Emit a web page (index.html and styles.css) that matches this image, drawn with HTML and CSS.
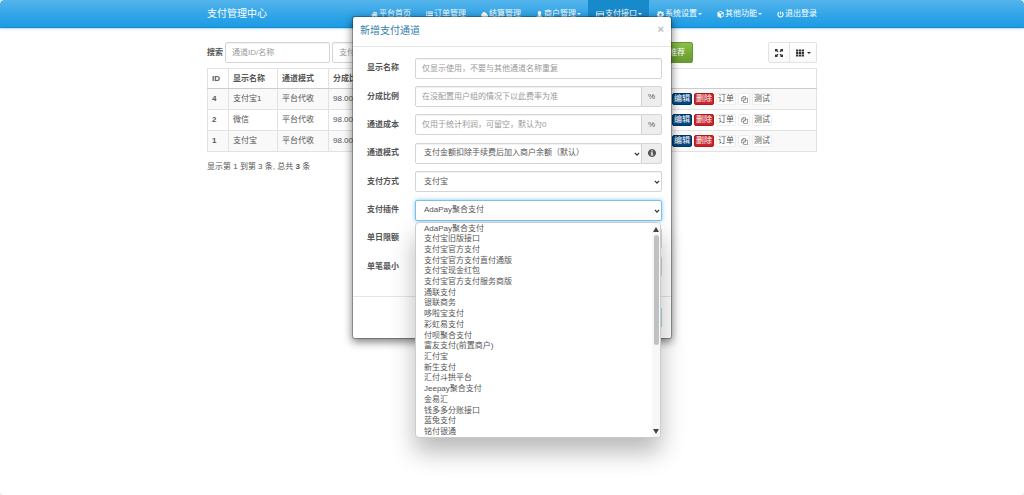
FILE: index.html
```html
<!DOCTYPE html>
<html lang="zh-CN">
<head>
<meta charset="utf-8">
<title>支付管理中心</title>
<link rel="stylesheet" href="styles.css">
</head>
<body>
<svg class="sprite" aria-hidden="true">
  <symbol id="copy" viewBox="0 0 16 16"><path d="M6 11H1V5l4-4h5v4M1 5h4V1M6 9l4-4h5v10H6zM6 9h4V5" fill="none" stroke="currentColor" stroke-width="1.3"/></symbol>
  <symbol id="chevron" viewBox="0 0 10 10"><path d="M1.500 3l3.500 4 3.500-4" fill="none" stroke="currentColor" stroke-width="2"/></symbol>
</svg>
<header class="navbar">
  <div class="container navbar-inner">
    <a class="brand" href="#">支付管理中心</a>
    <nav class="nav">
      <a href="#"><svg class="icon" viewBox="0 0 16 16"><path d="M8 1l2.500 2.500V2h2.500v4L16 9l-1 1-7-6.500L1 10 0 9zM8 5l5.500 5v5H9.500v-4h-3v4h-4v-5z"/></svg>平台首页</a>
      <a href="#"><svg class="icon" viewBox="0 0 16 16"><path d="M0 1h3v2.500H0zm4 0h12v2.500H4zM0 5h3v2.500H0zm4 0h12v2.500H4zM0 9h3v2.500H0zm4 0h12v2.500H4zM0 13h3v2.500H0zm4 0h12v2.500H4z"/></svg>订单管理</a>
      <a href="#"><svg class="icon" viewBox="0 0 16 16"><path d="M4 14a4 4 0 0 1-1.500-7.500 4.500 4.500 0 0 1 8.500-2 3 3 0 0 1 2.500 3.500A3 3 0 0 1 13 14z"/></svg>结算管理</a>
      <a href="#"><svg class="icon" viewBox="0 0 16 16"><path d="M8 0c2.500 0 4 2 4 4.500S10.500 9 10 9.500L14 12c1 1 1 4 0 4H2c-1 0-1-3 0-4l4-2.500C5.500 9 4 7 4 4.500S5.500 0 8 0z"/></svg>商户管理<span class="caret"></span></a>
      <a class="active" href="#"><svg class="icon wide" viewBox="0 0 18 16"><path fill-rule="evenodd" d="M1 1h16l1 1v12l-1 1H1l-1-1V2zm.500 1.500V5h15V2.500zm0 5.500v5.500h15V8zM3 10.500h5V12H3z"/></svg>支付接口<span class="caret"></span></a>
      <a href="#"><svg class="icon" viewBox="0 0 16 16"><path fill-rule="evenodd" d="M6.500 0h3l.500 2.300 1.500.600 2-1.300 2 2-1.300 2 .500 1.400L16 7v3l-2 .500-.600 1.400 1.100 2-2 2-2-1.200-1.200.600L9 16H6.500L6 14.700l-1.400-.600-2 1.300-2-2 1.300-2L1.400 10 0 9.500v-3L1.600 6l.600-1.400-1.200-2 2-2 2 1.300L6 2.300zM8 5a3 3 0 1 0 .010 0z"/></svg>系统设置<span class="caret"></span></a>
      <a href="#"><svg class="icon" viewBox="0 0 16 16"><path fill-rule="evenodd" d="M8 0l7 3v9l-7 4-7-4V3zM8 1.800L3.500 4 8 6l4.500-2zM9 8v5.500l4.500-2.500V5.800z"/></svg>其他功能<span class="caret"></span></a>
      <a href="#"><svg class="icon" viewBox="0 0 16 16"><path d="M4.500 3a6 6 0 1 0 7 0M8 1v7" fill="none" stroke="currentColor" stroke-width="2.500"/></svg>退出登录</a>
    </nav>
  </div>
</header>
<main class="container page">
  <form class="toolbar">
    <label for="kw">搜索</label>
    <input class="control search" id="kw" type="text" placeholder="通道ID/名称">
    <input class="control type" type="text" placeholder="支付方式" aria-label="支付方式">
    <button class="btn-green" type="button">推荐</button>
    <div class="btn-group">
      <button type="button" aria-label="全屏"><svg class="icon" viewBox="0 0 16 16"><path d="M0 0h6L4.200 1.800 7 4.500 5 6.500 1.800 4 0 6zM16 0v6l-1.800-2L11 6.500l-2-2 2.800-2.700L10 0zM0 16v-6l1.800 2L5 9.500l2 2-2.800 2.700L6 16zM16 16h-6l1.800-1.800L9 11.500l2-2 3.200 2.500 1.800-2z"/></svg></button>
      <button type="button" aria-label="列"><svg class="icon" viewBox="0 0 16 16"><path d="M0 1h4.500v4H0zm5.700 0h4.600v4H5.700zm5.800 0H16v4h-4.500zM0 6h4.500v4H0zm5.700 0h4.600v4H5.700zm5.800 0H16v4h-4.500zM0 11h4.500v4H0zm5.700 0h4.600v4H5.700zm5.800 0H16v4h-4.500z"/></svg><span class="caret"></span></button>
    </div>
  </form>
  <table class="grid">
    <colgroup><col class="c-id"><col class="c-name"><col class="c-mode"><col class="c-rate"><col class="c-act"></colgroup>
    <thead><tr><th>ID</th><th>显示名称</th><th>通道模式</th><th>分成比例</th><th></th></tr></thead>
    <tbody>
      <tr><th>4</th><td>支付宝1</td><td>平台代收</td><td>98.00</td><td><div class="actions"><button class="blue" type="button">编辑</button><button class="red" type="button">删除</button><button type="button">订单</button><button type="button" aria-label="复制"><svg class="icon"><use href="#copy"/></svg></button><button type="button">测试</button></div></td></tr>
      <tr><th>2</th><td>微信</td><td>平台代收</td><td>98.00</td><td><div class="actions"><button class="blue" type="button">编辑</button><button class="red" type="button">删除</button><button type="button">订单</button><button type="button" aria-label="复制"><svg class="icon"><use href="#copy"/></svg></button><button type="button">测试</button></div></td></tr>
      <tr><th>1</th><td>支付宝</td><td>平台代收</td><td>98.00</td><td><div class="actions"><button class="blue" type="button">编辑</button><button class="red" type="button">删除</button><button type="button">订单</button><button type="button" aria-label="复制"><svg class="icon"><use href="#copy"/></svg></button><button type="button">测试</button></div></td></tr>
    </tbody>
  </table>
  <p class="summary">显示第 1 到第 3 条, 总共 <b>3</b> 条</p>
</main>

<div class="overlay">
  <section class="modal" role="dialog" aria-labelledby="dlg-title">
    <div class="modal-head"><h2 id="dlg-title">新增支付通道</h2><button type="button" class="close" aria-label="关闭">×</button></div>
    <form class="modal-body">
      <div class="row"><label for="f1">显示名称</label><div class="field"><input class="control" id="f1" type="text" placeholder="仅显示使用，不要与其他通道名称重复"></div></div>
      <div class="row"><label for="f2">分成比例</label><div class="field"><input class="control" id="f2" type="text" placeholder="在没配置用户组的情况下以此费率为准"><span class="addon">%</span></div></div>
      <div class="row"><label for="f3">通道成本</label><div class="field"><input class="control" id="f3" type="text" placeholder="仅用于统计利润，可留空，默认为0"><span class="addon">%</span></div></div>
      <div class="row"><label for="f4">通道模式</label><div class="field"><div class="select"><select class="control" id="f4"><option>支付金额扣除手续费后加入商户余额（默认）</option></select><svg class="chev"><use href="#chevron"/></svg></div><span class="addon"><svg class="icon" viewBox="0 0 16 16"><path fill-rule="evenodd" d="M8 0a8 8 0 1 0 .010 0zM6.500 2.500h3V5h-3zM5.500 6.500h4V11h1v2h-5v-2h1V8.500h-1z"/></svg></span></div></div>
      <div class="row"><label for="f5">支付方式</label><div class="field"><div class="select"><select class="control" id="f5"><option>支付宝</option></select><svg class="chev"><use href="#chevron"/></svg></div></div></div>
      <div class="row"><label for="f6">支付插件</label><div class="field"><div class="select"><select class="control focused" id="f6"><option>AdaPay聚合支付</option></select><svg class="chev"><use href="#chevron"/></svg></div>
        <div class="dropdown">
          <ul role="listbox" aria-label="支付插件">
            <li role="option">AdaPay聚合支付</li><li role="option">支付宝旧版接口</li><li role="option">支付宝官方支付</li><li role="option">支付宝官方支付直付通版</li><li role="option">支付宝现金红包</li><li role="option">支付宝官方支付服务商版</li><li role="option">通联支付</li><li role="option">银联商务</li><li role="option">哆啦宝支付</li><li role="option">彩虹易支付</li><li role="option">付呗聚合支付</li><li role="option">富友支付(前置商户)</li><li role="option">汇付宝</li><li role="option">新生支付</li><li role="option">汇付斗拱平台</li><li role="option">Jeepay聚合支付</li><li role="option">金易汇</li><li role="option">钱多多分账接口</li><li role="option">蓝兔支付</li><li role="option">铭付银通</li>
          </ul>
          <div class="scrollbar"><span class="up"></span><span class="track"><span class="thumb"></span></span><span class="down"></span></div>
        </div>
      </div></div>
      <div class="row"><label for="f7">单日限额</label><div class="field"><input class="control" id="f7" type="text"></div></div>
      <div class="row"><label for="f8">单笔最小</label><div class="field"><input class="control" id="f8" type="text"></div></div>
    </form>
    <div class="modal-foot"><button type="button" class="save" aria-label="保存"></button></div>
  </section>
</div>
</body>
</html>
```

FILE: styles.css
```css
* { box-sizing: border-box; }
html { background: #e9e9e9; }
body {
  margin: 0;
  min-height: 100vh;
  background: #fff;
  border-radius: 4px;
  color: #555;
  font: 8px/12px "Liberation Sans", "Noto Sans CJK SC", sans-serif;
}
button, input, select { font: inherit; color: inherit; margin: 0; }
a { color: inherit; text-decoration: none; }
.sprite { position: absolute; width: 0; height: 0; }
.icon { width: 7px; height: 7px; fill: currentColor; flex: none; }
.icon.wide { width: 8px; }
.caret { border: 2px solid transparent; border-top-color: currentColor; border-bottom: 0; }
.container { max-width: 610px; margin: 0 auto; }

.navbar {
  color: #fff;
  border-radius: 4px 4px 0 0;
  background: linear-gradient(#54b4eb, #2fa4e7 60%, #1d9ce5);
  border-bottom: 1px solid #178acc;
  box-shadow: 0 1px 2px rgba(47, 164, 231, .4);
}
.navbar-inner { display: flex; justify-content: space-between; height: 27px; }
.brand { font-size: 10px; line-height: 27px; }
.nav { display: flex; margin-right: -7px; white-space: nowrap; }
.nav a { display: flex; align-items: center; gap: 1px; padding: 1px 7px 0 8px; }
.nav .active { background: #178acc; }

.page { padding-top: 14px; }
.toolbar { display: flex; align-items: center; gap: 2px; margin-bottom: 5px; }
.toolbar label { font-weight: bold; }
.control {
  width: 100%;
  min-width: 0;
  height: 21px;
  padding: 0 6px;
  border: 1px solid #d4d4d4;
  border-radius: 2px;
  background: #fff;
  box-shadow: inset 0 1px 1px rgba(0, 0, 0, .06);
  outline: 0;
}
.control::placeholder { color: #999; opacity: 1; }
.toolbar .control { width: 105px; }
.toolbar .type { flex: none; }
.btn-green {
  width: 60px;
  height: 21px;
  margin-left: 194px;
  padding: 0 7px;
  text-align: right;
  color: #fff;
  border: 1px solid #64992f;
  border-radius: 2px;
  background: linear-gradient(#88c149, #73a839 60%, #699934);
}
.btn-group { display: flex; margin-left: auto; }
.btn-group button {
  display: flex;
  align-items: center;
  justify-content: center;
  gap: 3px;
  width: 28px;
  height: 21px;
  padding: 0;
  color: #333;
  background: linear-gradient(#fff, #f9f9f9);
  border: 1px solid #e3e3e3;
  border-radius: 0 2px 2px 0;
}
.btn-group button:first-child { width: 22px; margin-right: -1px; border-radius: 2px 0 0 2px; }
.btn-group .icon { width: 8px; height: 8px; }

.grid { width: 100%; table-layout: fixed; border-collapse: collapse; }
.grid th, .grid td { height: 21px; padding: 0 4px; border: 1px solid #e2e2e2; text-align: left; white-space: nowrap; }
.grid thead th { height: 20px; border-bottom-color: #ccc; }
.grid tbody tr:nth-child(odd) { background: #f9f9f9; }
.c-id { width: 21px; }
.c-name { width: 49px; }
.c-mode { width: 51px; }
.c-rate { width: 50px; }
.actions { display: flex; justify-content: flex-end; gap: 2px; margin-right: 40px; }
.actions button {
  display: flex;
  align-items: center;
  justify-content: center;
  width: 20px;
  height: 12px;
  padding: 0;
  border: 1px solid #eee;
  border-radius: 2px;
  background: #fff;
  line-height: 10px;
}
.actions button:nth-child(4) { width: 12px; }
.actions .blue { color: #fff; border-color: #02385f; background: #044880; }
.actions .red { color: #fff; border-color: #a91c22; background: #c9262d; }
.summary { margin: 9px 0 0; }

.overlay { position: absolute; inset: 0 0 auto; padding: 16px 8px 0; }
.modal {
  max-width: 320px;
  margin: 0 auto;
  background: #fff;
  background-clip: padding-box;
  border: 1px solid rgba(0, 0, 0, .25);
  border-radius: 3px;
  box-shadow: 0 3px 9px rgba(0, 0, 0, .5);
}
.modal-head { display: flex; justify-content: space-between; padding: 7px 7px 8px; border-bottom: 1px solid #e5e5e5; }
.modal-head h2 { margin: 0; font-size: 10px; line-height: 14px; font-weight: normal; color: #317eac; }
.close { padding: 0; border: 0; background: none; color: #bbb; font-size: 11px; line-height: 11px; font-weight: bold; align-self: flex-start; }
.modal-body { display: grid; grid-auto-rows: 1fr; min-height: 249px; padding: 7px 9px 15px 0; }
.row { display: grid; grid-template-columns: 46px 1fr; column-gap: 16px; align-items: center; align-self: center; }
.row label { font-weight: bold; text-align: right; white-space: nowrap; }
.field { display: flex; position: relative; min-width: 0; }
.addon {
  flex: none;
  display: flex;
  align-items: center;
  justify-content: center;
  width: 21px;
  margin-left: -1px;
  border: 1px solid #d4d4d4;
  border-radius: 0 2px 2px 0;
  background: #eee;
}
.addon .icon { width: 8px; height: 8px; }
.select { position: relative; flex: 1; min-width: 0; }
.select select { appearance: none; padding: 0 12px 0 8px; display: block; }
.chev { position: absolute; right: 2px; top: 8px; width: 6px; height: 6px; color: #333; }
.focused { border-color: #7cbfe8; box-shadow: 0 0 4px rgba(47, 164, 231, .6); }

.dropdown {
  position: absolute;
  z-index: 2;
  top: 22px;
  left: 0;
  right: 1px;
  display: flex;
  height: 216px;
  background: #fff;
  border: 1px solid #ccc;
  border-radius: 4px;
  box-shadow: 0 14px 24px rgba(0, 0, 0, .28);
  overflow: hidden;
}
.dropdown ul { flex: 1; display: flex; flex-direction: column; margin: 0; padding: 0 8px; list-style: none; }
.dropdown li { flex: 1; line-height: 11px; min-height: 0; white-space: nowrap; }
.scrollbar { width: 8px; display: flex; flex-direction: column; align-items: center; padding: 4px 0 3px; background: #f7f7f7; }
.track { flex: 1; padding: 3px 0; }
.thumb { display: block; width: 5px; height: 110px; border-radius: 3px; background: #c1c1c1; }
.up { border: 3px solid transparent; border-top: 0; border-bottom: 5px solid #444; }
.down { border: 3px solid transparent; border-bottom: 0; border-top: 5px solid #444; }

.modal-foot { display: flex; justify-content: flex-end; padding: 10px 9px; border-top: 1px solid #e5e5e5; }
.save { width: 28px; height: 21px; padding: 0; border: 1px solid #a9d5ee; border-radius: 2px; background: #2fa4e7; }
```
